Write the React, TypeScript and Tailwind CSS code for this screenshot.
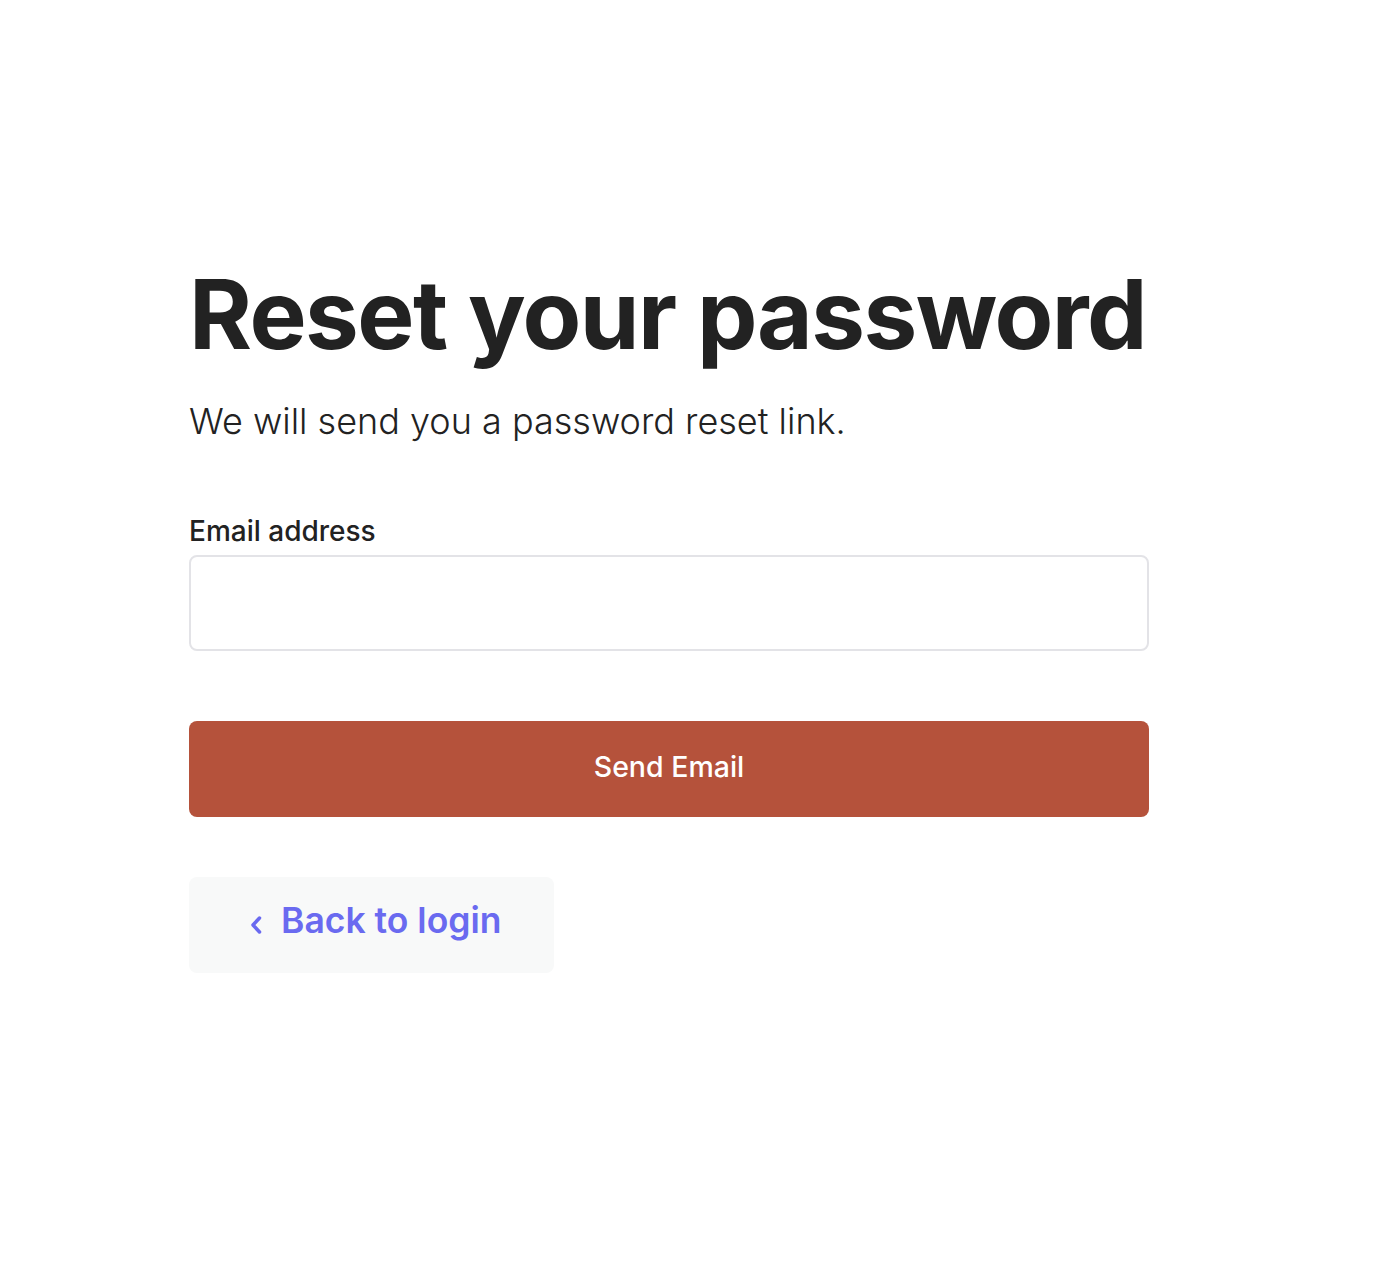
export default function App() {
  return (
    <div className="min-h-screen bg-white" style={{ fontFamily: "Inter, 'Noto Sans', sans-serif" }}>
      <div className="w-[960px] ml-[189px] pt-[259px]">
        <h1 className="whitespace-nowrap text-[96px] leading-[110px] font-bold tracking-[-1.5px] text-[#222222]">Reset your password</h1>
        <p className="mt-[30px] text-[36px] leading-[44px] font-light text-[#222222]">We will send you a password reset link.</p>

        <form className="mt-[70px] flex flex-col" onSubmit={(e) => e.preventDefault()}>
          <label htmlFor="email" className="text-[28px] leading-[36px] font-medium text-[#222222]">Email address</label>
          <input
            id="email"
            type="email"
            className="mt-[6px] h-[96px] w-full rounded-[8px] border-2 border-[#e3e3e7] bg-white px-5 text-[28px] outline-none"
          />
          <button
            type="submit"
            className="mt-[70px] h-[96px] w-full rounded-[8px] bg-[#b5523b] pb-[3px] text-[28.5px] font-medium text-white"
          >
            Send Email
          </button>
        </form>

        <button className="mt-[60px] flex h-[96px] w-[365px] items-center gap-[19px] rounded-[8px] bg-[#f8f9f9] pl-[61px] pb-[9px] text-[#6a6af0]">
          <svg width="12" height="20" viewBox="0 0 12 20" fill="none" className="mt-[8px]">
            <path d="M9.5 3L3 10L9.5 17" stroke="currentColor" strokeWidth="3.5" strokeLinecap="round" strokeLinejoin="round" />
          </svg>
          <span className="text-[35.5px] leading-[44px] font-semibold">Back to login</span>
        </button>
      </div>
    </div>
  );
}
